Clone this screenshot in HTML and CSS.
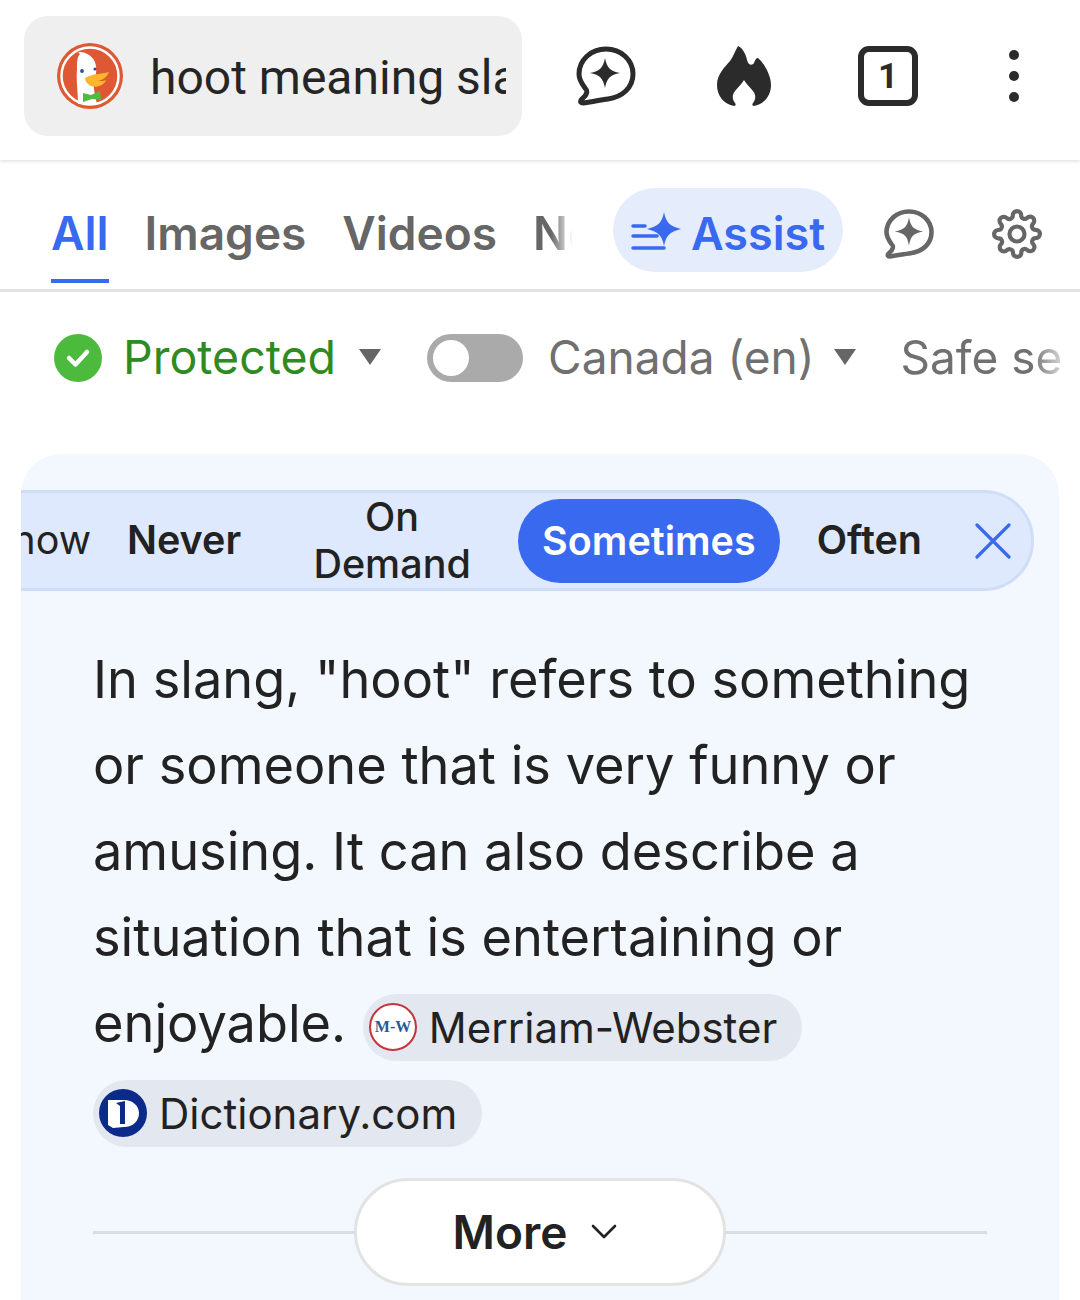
FILE: index.html
```html
<!DOCTYPE html>
<html lang="en">
<head>
    <meta charset="UTF-8">
    <meta name="viewport" content="width=device-width, initial-scale=1.0">
    <title>hoot meaning slang</title>
    <link rel="stylesheet" href="styles.css">
</head>
<body>
    <div class="page">
        <header class="topbar">
            <div class="address">
                <svg class="ddg-logo" viewBox="0 0 66 66">
                    <circle cx="33" cy="33" r="33" fill="#de5833"/>
                    <circle cx="33" cy="33" r="28.5" fill="none" stroke="#fff" stroke-width="2.5"/>
                    <path d="M21 61 C21 48 19 38 20 26 C20 19 20 14 23 11 C21 10 21 9 23 9 C28 9 34 12 37 17 C40 23 40 30 37 37 C36 44 38 52 40 61 Z" fill="#fff"/>
                    <circle cx="25" cy="28" r="1.9" fill="#2d4f8e"/>
                    <circle cx="38" cy="26" r="1.6" fill="#2d4f8e"/>
                    <path d="M28 35 C34 31 44 31 52 29 C50 34 46 37 41 38 C45 38 47 38 49 37 C47 43 39 45 34 43 C31 42 28 38 28 35Z" fill="#fdb52b"/>
                    <path d="M26 50 L34 52 L43 48 L44 57 L35 56 L26 59Z" fill="#4dbd3f"/>
                </svg>
                <span class="query">hoot meaning slang</span>
            </div>
            <svg class="icon chat-icon" viewBox="0 0 60 60">
                <path d="M30 3 C15 3 3 14 3 28 C3 34 6 38 9 42 C12 45 11 47 9 50 L5 54 C4 56 5 57 7 57 C15 56 24 54 32 53 C46 51 57 42 57 28 C57 14 45 3 30 3Z" fill="none" stroke="#2b2b2b" stroke-width="5" stroke-linejoin="round"/>
                <path d="M29 12 C31 22 34 25 44 27 C34 29 31 32 29 42 C27 32 24 29 14 27 C24 25 27 22 29 12Z" fill="#2b2b2b"/>
            </svg>
            <svg class="icon flame-icon" viewBox="0 0 54 60">
                <path d="M21 0 C26 2 29 9 30 14 C31 19 35 20 37 17 C38 14 39 12 41 12 C47 17 54 29 54 39 C54 50 47 58 37 60 C35 60 35 58 36 57 C39 53 39 49 36 45 C33 41 29 38 27 34 C25 38 21 41 18 45 C15 49 15 53 18 57 C19 58 19 60 17 60 C7 58 0 50 0 39 C0 28 8 21 13 15 C16 11 18 5 21 0Z" fill="#2b2b2b"/>
            </svg>
            <div class="tab-count">1</div>
            <div class="menu-dots"><i></i><i></i><i></i></div>
        </header>

        <nav class="tabs">
            <div class="tab-list">
                <a class="tab active">All</a>
                <a class="tab">Images</a>
                <a class="tab">Videos</a>
                <a class="tab news">News</a>
            </div>
            <a class="assist">
                <svg class="assist-icon" viewBox="0 0 50 40">
                    <path d="M2 14 H14 M2 24 H26 M2 36 H33" stroke="#3969ef" stroke-width="3.5" stroke-linecap="round"/>
                    <path d="M33 0 C35 10 38 14 50 17 C38 20 35 24 33 34 C31 24 28 20 16 17 C28 14 31 10 33 0Z" fill="#3969ef"/>
                </svg>
                <span>Assist</span>
            </a>
            <svg class="tab-chat" viewBox="0 0 60 60">
                <path d="M30 3 C15 3 3 14 3 28 C3 34 6 38 9 42 C12 45 11 47 9 50 L5 54 C4 56 5 57 7 57 C15 56 24 54 32 53 C46 51 57 42 57 28 C57 14 45 3 30 3Z" fill="none" stroke="#666" stroke-width="5.5" stroke-linejoin="round"/>
                <path d="M30 10 C32 21 35 25 47 27 C35 29 32 33 30 44 C28 33 25 29 13 27 C25 25 28 21 30 10Z" fill="#666"/>
            </svg>
            <svg class="gear" viewBox="0 0 24 24" fill="none" stroke="#666" stroke-width="2">
                <circle cx="12" cy="12" r="3.6"/>
                <path d="M19.4 15a1.65 1.65 0 0 0 .33 1.82l.06.06a2 2 0 0 1 0 2.83 2 2 0 0 1-2.83 0l-.06-.06a1.65 1.65 0 0 0-1.82-.33 1.65 1.65 0 0 0-1 1.51V21a2 2 0 0 1-2 2 2 2 0 0 1-2-2v-.09A1.65 1.65 0 0 0 9 19.4a1.65 1.65 0 0 0-1.82.33l-.06.06a2 2 0 0 1-2.83 0 2 2 0 0 1 0-2.83l.06-.06a1.65 1.65 0 0 0 .33-1.82 1.65 1.65 0 0 0-1.51-1H3a2 2 0 0 1-2-2 2 2 0 0 1 2-2h.09A1.65 1.65 0 0 0 4.6 9a1.65 1.65 0 0 0-.33-1.82l-.06-.06a2 2 0 0 1 0-2.83 2 2 0 0 1 2.83 0l.06.06a1.65 1.65 0 0 0 1.82.33H9a1.65 1.65 0 0 0 1-1.51V3a2 2 0 0 1 2-2 2 2 0 0 1 2 2v.09a1.65 1.65 0 0 0 1 1.51 1.65 1.65 0 0 0 1.82-.33l.06-.06a2 2 0 0 1 2.83 0 2 2 0 0 1 0 2.83l-.06.06a1.65 1.65 0 0 0-.33 1.82V9a1.65 1.65 0 0 0 1.51 1H21a2 2 0 0 1 2 2 2 2 0 0 1-2 2h-.09a1.65 1.65 0 0 0-1.51 1z"/>
            </svg>
        </nav>

        <div class="filters">
            <svg class="check" viewBox="0 0 48 48">
                <circle cx="24" cy="24" r="24" fill="#4cba3c"/>
                <path d="M15 24 L21.5 30.5 L33 18" fill="none" stroke="#fff" stroke-width="4.5" stroke-linecap="round" stroke-linejoin="round"/>
            </svg>
            <span class="protected">Protected</span>
            <i class="caret"></i>
            <div class="toggle"><i></i></div>
            <span class="region">Canada (en)</span>
            <i class="caret caret-region"></i>
            <span class="safe">Safe search</span>
        </div>

        <section class="card">
            <div class="choice-bar">
                <div class="choices">
                    <span class="choice">Show</span>
                    <span class="choice never">Never</span>
                    <span class="choice demand">On Demand</span>
                    <span class="choice selected">Sometimes</span>
                    <span class="choice often">Often</span>
                </div>
                <svg class="close" viewBox="0 0 36 36">
                    <path d="M2 2 L34 34 M34 2 L2 34" stroke="#3969ef" stroke-width="3.2" stroke-linecap="round"/>
                </svg>
            </div>

            <p class="answer">
                In slang, "hoot" refers to something or someone that is very funny or amusing. It can also describe a situation that is entertaining or enjoyable.
                <a class="source source-first">
                    <svg viewBox="0 0 48 48">
                        <circle cx="24" cy="24" r="23" fill="#fff" stroke="#c8323c" stroke-width="2"/>
                        <text x="24" y="29" text-anchor="middle" font-family="Liberation Serif" font-weight="700" font-size="16" fill="#2a5a95">M-W</text>
                    </svg>
                    <span>Merriam-Webster</span>
                </a>
                <a class="source">
                    <svg viewBox="0 0 48 48">
                        <circle cx="24" cy="24" r="24" fill="#0b2a8a"/>
                        <path d="M9 11 H25 C34 11 40 17 40 24 C40 32 34 38 25 38 L14 39 L9 36Z" fill="#fff"/>
                        <path d="M17 14 L26 12 V35 H21 V17Z" fill="#0b2a8a"/>
                    </svg>
                    <span>Dictionary.com</span>
                </a>
            </p>

            <div class="more-row">
                <button class="more">More
                    <svg viewBox="0 0 26 16"><path d="M2 2 L13 13 L24 2" fill="none" stroke="#222" stroke-width="2.6" stroke-linecap="round" stroke-linejoin="round"/></svg>
                </button>
            </div>
        </section>
    </div>
</body>
</html>
```

FILE: styles.css
```css
html, body {
    margin: 0;
    background-color: #fff;
}
.page {
    width: 1080px;
    height: 1300px;
    overflow: hidden;
    font-family: "Inter", "Liberation Sans", sans-serif;
    color: #222;
}
.topbar {
    height: 160px;
    box-sizing: border-box;
    display: flex;
    align-items: center;
    padding: 16px 0 24px 24px;
    box-shadow: 0 1px 4px rgba(0,0,0,0.15);
}
.address {
    width: 498px;
    height: 120px;
    box-sizing: border-box;
    display: flex;
    align-items: center;
    padding: 0 16px 0 33px;
    background-color: #efefef;
    border-radius: 24px;
}
.ddg-logo {
    width: 66px;
    height: 66px;
    flex: none;
}
.query {
    margin: 2px 0 0 27px;
    font-family: "Roboto", sans-serif;
    font-size: 48px;
    white-space: nowrap;
    overflow: hidden;
    color: #252525;
}
.icon {
    flex: none;
}
.chat-icon {
    width: 60px;
    height: 60px;
    margin-left: 54px;
}
.flame-icon {
    width: 54px;
    height: 60px;
    margin-left: 81px;
}
.tab-count {
    width: 60px;
    height: 60px;
    box-sizing: border-box;
    margin-left: 87px;
    border: 6px solid #2b2b2b;
    border-radius: 11px;
    font-family: "Roboto", sans-serif;
    font-weight: 700;
    font-size: 35px;
    line-height: 49px;
    text-align: center;
    color: #2b2b2b;
}
.menu-dots {
    width: 10px;
    margin-left: 91px;
    display: flex;
    flex-direction: column;
    gap: 11px;
}
.menu-dots i {
    width: 10px;
    height: 10px;
    border-radius: 50%;
    background-color: #2b2b2b;
}
.tabs {
    height: 132px;
    box-sizing: border-box;
    display: flex;
    align-items: flex-start;
    padding: 28px 0 0 51px;
    border-bottom: 3px solid #e2e2e2;
}
.tab-list {
    width: 526px;
    height: 101px;
    flex: none;
    display: flex;
    gap: 36px;
    overflow: hidden;
}
.tab {
    height: 95px;
    box-sizing: border-box;
    padding-top: 17px;
    font-size: 46px;
    font-weight: 600;
    line-height: 56px;
    color: #666;
}
.tab.active {
    color: #3969ef;
    border-bottom: 4px solid #3969ef;
}
.news {
    -webkit-mask-image: linear-gradient(to right, #000 18px, transparent 40px);
    mask-image: linear-gradient(to right, #000 18px, transparent 40px);
}
.assist {
    width: 230px;
    height: 84px;
    margin-left: 36px;
    flex: none;
    display: flex;
    align-items: center;
    justify-content: center;
    gap: 10px;
    background-color: #e5edfc;
    border-radius: 42px;
    font-size: 45px;
    font-weight: 600;
    color: #3969ef;
}
.assist span {
    margin-top: 6px;
}
.assist-icon {
    width: 50px;
    height: 40px;
    margin-top: 4px;
}
.tab-chat {
    width: 50px;
    height: 50px;
    margin: 21px 0 0 41px;
}
.gear {
    width: 50px;
    height: 50px;
    margin: 21px 0 0 58px;
}
.filters {
    height: 162px;
    box-sizing: border-box;
    display: flex;
    align-items: center;
    padding: 0 0 32px 54px;
    white-space: nowrap;
    font-size: 46px;
    color: #707070;
    overflow: hidden;
}
.check {
    width: 48px;
    height: 48px;
    flex: none;
    margin-top: 2px;
}
.protected {
    margin-left: 21px;
    font-size: 46.5px;
    color: #2f8a22;
}
.caret {
    width: 0;
    height: 0;
    flex: none;
    margin-left: 23px;
    border-left: 11px solid transparent;
    border-right: 11px solid transparent;
    border-top: 16px solid #666;
}
.caret-region {
    margin-left: 19px;
}
.toggle {
    width: 96px;
    height: 48px;
    flex: none;
    box-sizing: border-box;
    margin: 2px 0 0 46px;
    padding: 6px;
    background-color: #aaa;
    border-radius: 24px;
}
.toggle i {
    display: block;
    width: 36px;
    height: 36px;
    border-radius: 50%;
    background-color: #fff;
}
.region {
    margin-left: 25px;
}
.safe {
    margin-left: 45px;
    width: 160px;
    overflow: hidden;
    -webkit-mask-image: linear-gradient(to right, #000 130px, rgba(0,0,0,0.3) 160px);
    mask-image: linear-gradient(to right, #000 130px, rgba(0,0,0,0.3) 160px);
}
.card {
    width: 1038px;
    height: 860px;
    box-sizing: border-box;
    margin-left: 21px;
    padding-top: 36px;
    background-color: #f3f7fe;
    border-radius: 40px 40px 0 0;
}
.choice-bar {
    width: 1013px;
    height: 101px;
    box-sizing: border-box;
    display: flex;
    align-items: center;
    background-color: #dfe9fd;
    border: 3px solid #d0ddf8;
    border-left: 0;
    border-radius: 0 50px 50px 0;
    overflow: hidden;
}
.choices {
    width: 937px;
    flex: none;
    display: flex;
    align-items: center;
    justify-content: flex-end;
    overflow: hidden;
    font-size: 39.5px;
    line-height: 47px;
    font-weight: 400;
    text-align: center;
}
.choice {
    flex: none;
}
.never {
    margin-left: 36px;
    font-weight: 600;
}
.demand {
    width: 170px;
    margin-left: 66px;
    font-weight: 500;
}
.selected {
    margin-left: 41px;
    height: 84px;
    box-sizing: border-box;
    padding: 0 24px;
    line-height: 84px;
    color: #fff;
    font-weight: 600;
    background-color: #3969ef;
    border-radius: 42px;
}
.often {
    margin-left: 37px;
    margin-right: 36px;
    font-weight: 600;
}
.close {
    width: 36px;
    height: 36px;
    flex: none;
    margin-left: 17px;
}
.answer {
    margin: 45px 0 0 72px;
    width: 900px;
    font-size: 52.3px;
    line-height: 86px;
    color: #222;
}
.source {
    display: inline-flex;
    align-items: center;
    vertical-align: -9px;
    gap: 12px;
    height: 67px;
    padding: 0 25px 0 6px;
    margin-right: 8px;
    background-color: #e3e7ef;
    border-radius: 34px;
    font-size: 42px;
    line-height: 67px;
}
.source-first {
    margin-left: 2px;
}
.source svg {
    width: 48px;
    height: 48px;
}
.more-row {
    width: 894px;
    height: 108px;
    margin: 26px 0 0 72px;
    display: flex;
    align-items: center;
    justify-content: center;
    background: linear-gradient(#d9dde3, #d9dde3) center / 100% 3px no-repeat;
}
.more {
    width: 372px;
    height: 108px;
    display: flex;
    align-items: center;
    justify-content: center;
    gap: 24px;
    padding: 0 10px 0 0;
    background-color: #fff;
    border: 3px solid #e3e3e3;
    border-radius: 54px;
    font-family: inherit;
    font-size: 46px;
    font-weight: 600;
    color: #222;
}
.more svg {
    width: 26px;
    height: 16px;
}
```
